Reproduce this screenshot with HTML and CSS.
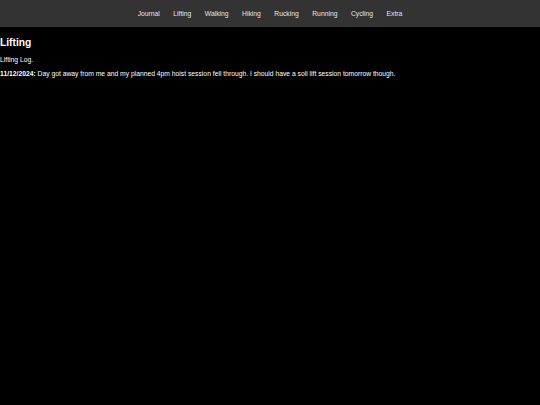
FILE: index.html
```html
<!DOCTYPE html>
<html lang="en">
<head>
<meta charset="utf-8">
<title>Lifting</title>
<link rel="stylesheet" href="styles.css">
</head>
<body>
<nav class="topnav">
  <a href="#">Journal</a>
  <a href="#">Lifting</a>
  <a href="#">Walking</a>
  <a href="#">Hiking</a>
  <a href="#">Rucking</a>
  <a href="#">Running</a>
  <a href="#">Cycling</a>
  <a href="#">Extra</a>
</nav>
<main class="content">
  <h1 class="title">Lifting</h1>
  <p class="text">Lifting Log.</p>
  <p class="text"><strong>11/12/2024:</strong> Day got away from me and my planned 4pm hoist session fell through. I should have a soli lift session tomorrow though.</p>
</main>
</body>
</html>
```

FILE: styles.css
```css
html, body {
  margin: 0;
  padding: 0;
  background: #000;
  color: #fff;
  font-family: "Liberation Sans", Arial, sans-serif;
}
.topnav {
  display: flex;
  justify-content: center;
  align-items: center;
  gap: 13.5px;
  height: 27px;
  background: #333;
}
.topnav a {
  color: #e6e6e6;
  text-decoration: none;
  font-size: 6.75px;
}
.content {
  padding: 0;
}
.title {
  font-size: 10.25px;
  margin: 10px 0 8px;
}
.text {
  font-size: 6.75px;
  margin: 7px 0;
}
```
